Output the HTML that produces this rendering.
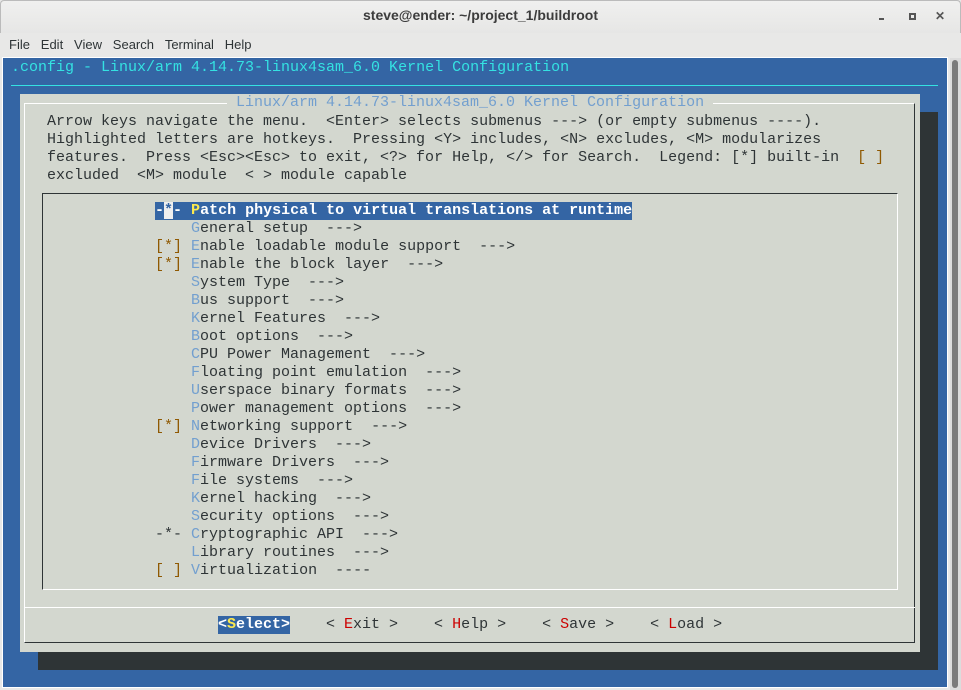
<!DOCTYPE html>
<html><head><style>
*{margin:0;padding:0;box-sizing:border-box}
body{width:961px;height:690px;background:#e8e8e7;position:relative;overflow:hidden;font-family:"Liberation Sans",sans-serif}
.a{position:absolute}
.m{font-family:"Liberation Mono","DejaVu Sans Mono",monospace;font-size:15px;line-height:18px;white-space:pre;color:#2e3436}
.h{color:#729fcf}.b{color:#8f5902}.r{color:#cc0000}
</style></head><body>
<div class="a" style="left:0;top:0;width:961px;height:33px;background:linear-gradient(#f0f0ef,#e6e6e5);border:1px solid #bbb;border-bottom:none;border-radius:4px 4px 0 0"></div>
<div class="a" style="left:0;top:7px;width:961px;text-align:center;font-weight:bold;font-size:14px;color:#3c3c3c">steve@ender: ~/project_1/buildroot</div>
<div class="a" style="left:879px;top:18px;width:5px;height:2px;background:#555"></div>
<div class="a" style="left:909px;top:13px;width:7px;height:7px;border:2px solid #555"></div>
<div class="a" style="left:935px;top:9px;font-size:12px;font-weight:bold;color:#555">✕</div>
<div class="a" style="left:9px;top:37px;font-size:13px;color:#2e3436">File&nbsp;&nbsp;&nbsp;Edit&nbsp;&nbsp;&nbsp;View&nbsp;&nbsp;&nbsp;Search&nbsp;&nbsp;&nbsp;Terminal&nbsp;&nbsp;&nbsp;Help</div>
<div class="a" style="left:2px;top:57px;width:946px;height:631px;background:#3465a4;border:1px solid #fff"></div>
<div class="a" style="left:950px;top:58px;width:11px;height:632px;background:#dcdcdc"></div>
<div class="a" style="left:952px;top:60px;width:6px;height:628px;background:#7b7b7b;border-radius:3px"></div>
<div class="a m" style="left:11px;top:59px;color:#34e2e2">.config - Linux/arm 4.14.73-linux4sam_6.0 Kernel Configuration</div>
<div class="a" style="left:11px;top:85px;width:927px;height:1px;background:#34e2e2"></div>
<div class="a" style="left:38px;top:112px;width:900px;height:558px;background:#2e3436"></div>
<div class="a" style="left:20px;top:94px;width:900px;height:558px;background:#d3d7cf"></div>
<div class="a" style="left:24px;top:103px;width:891px;height:540px;border-left:1px solid #fff;border-top:1px solid #fff;border-right:1px solid #2e3436;border-bottom:1px solid #2e3436"></div>
<div class="a" style="left:24px;top:607px;width:891px;height:1px;background:#fff"></div>
<div class="a m" style="left:227px;top:94px;background:#d3d7cf;color:#729fcf"> Linux/arm 4.14.73-linux4sam_6.0 Kernel Configuration </div>
<div class="a m" style="left:47px;top:113px">Arrow keys navigate the menu.  &lt;Enter&gt; selects submenus ---&gt; (or empty submenus ----).
Highlighted letters are hotkeys.  Pressing &lt;Y&gt; includes, &lt;N&gt; excludes, &lt;M&gt; modularizes
features.  Press &lt;Esc&gt;&lt;Esc&gt; to exit, &lt;?&gt; for Help, &lt;/&gt; for Search.  Legend: [*] built-in  <span class="b">[ ]</span>
excluded  &lt;M&gt; module  &lt; &gt; module capable</div>
<div class="a" style="left:42px;top:193px;width:856px;height:397px;border-left:1px solid #2e3436;border-top:1px solid #2e3436;border-right:1px solid #fff;border-bottom:1px solid #fff"></div>
<div class="a m" style="left:155px;top:202px;background:#3465a4;color:#fff;font-weight:bold">-<span style="background:#eee;color:#3465a4">*</span>- <span style="color:#fce94f">P</span>atch physical to virtual translations at runtime</div>
<div class="a m" style="left:155px;top:220px">    <span class="h">G</span>eneral setup  ---&gt;
<span class="b">[*]</span> <span class="h">E</span>nable loadable module support  ---&gt;
<span class="b">[*]</span> <span class="h">E</span>nable the block layer  ---&gt;
    <span class="h">S</span>ystem Type  ---&gt;
    <span class="h">B</span>us support  ---&gt;
    <span class="h">K</span>ernel Features  ---&gt;
    <span class="h">B</span>oot options  ---&gt;
    <span class="h">C</span>PU Power Management  ---&gt;
    <span class="h">F</span>loating point emulation  ---&gt;
    <span class="h">U</span>serspace binary formats  ---&gt;
    <span class="h">P</span>ower management options  ---&gt;
<span class="b">[*]</span> <span class="h">N</span>etworking support  ---&gt;
    <span class="h">D</span>evice Drivers  ---&gt;
    <span class="h">F</span>irmware Drivers  ---&gt;
    <span class="h">F</span>ile systems  ---&gt;
    <span class="h">K</span>ernel hacking  ---&gt;
    <span class="h">S</span>ecurity options  ---&gt;
-*- <span class="h">C</span>ryptographic API  ---&gt;
    <span class="h">L</span>ibrary routines  ---&gt;
<span class="b">[ ]</span> <span class="h">V</span>irtualization  ----</div>
<div class="a m" style="left:218px;top:616px;background:#3465a4;color:#fff;font-weight:bold">&lt;<span style="color:#fce94f">S</span>elect&gt;</div>
<div class="a m" style="left:326px;top:616px">&lt; <span class="r">E</span>xit &gt;    &lt; <span class="r">H</span>elp &gt;    &lt; <span class="r">S</span>ave &gt;    &lt; <span class="r">L</span>oad &gt;</div>
</body></html>
